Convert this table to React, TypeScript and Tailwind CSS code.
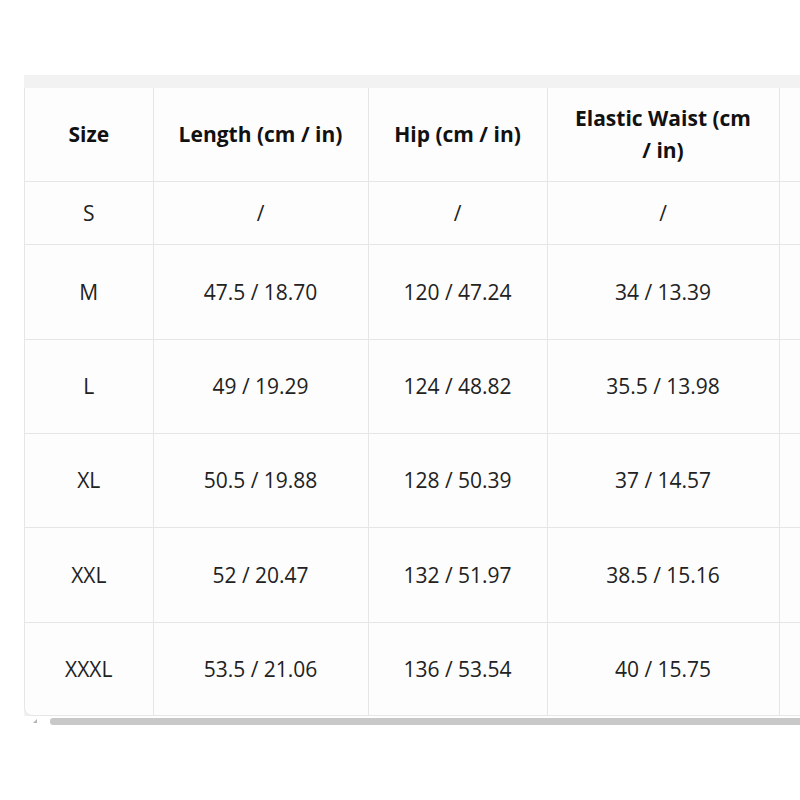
import React from "react";

const rows: [string, string, string, string][] = [
  ["S", "/", "/", "/"],
  ["M", "47.5 / 18.70", "120 / 47.24", "34 / 13.39"],
  ["L", "49 / 19.29", "124 / 48.82", "35.5 / 13.98"],
  ["XL", "50.5 / 19.88", "128 / 50.39", "37 / 14.57"],
  ["XXL", "52 / 20.47", "132 / 51.97", "38.5 / 15.16"],
  ["XXXL", "53.5 / 21.06", "136 / 53.54", "40 / 15.75"],
];

const heights = ["h-[63px]", "h-[95px]", "h-[94px]", "h-[94px]", "h-[95px]", "h-[93px]"];

export default function App() {
  return (
    <div
      className="w-full h-[800px] overflow-hidden bg-white"
      style={{ fontFamily: '"Open Sans", "Noto Sans", sans-serif' }}
    >
      <div className="pt-[75px] pl-[24px]">
        <div className="w-[1000px] bg-[#f2f2f2] pt-[13px]">
          <div className="border-l border-b border-[#e6e6e6] rounded-bl-[8px] overflow-hidden bg-[#fdfdfd] w-fit">
            <table className="table-fixed border-collapse text-[21px] leading-[32px] text-[#222]">
              <colgroup>
                <col className="w-[128px]" />
                <col className="w-[215px]" />
                <col className="w-[179px]" />
                <col className="w-[232px]" />
                <col className="w-[220px]" />
              </colgroup>
              <thead>
                <tr className="h-[93px]">
                  <th className="border-r border-b border-[#e6e6e6] font-bold text-[#111] px-[14px] text-center">Size</th>
                  <th className="border-r border-b border-[#e6e6e6] font-bold text-[#111] px-[14px] text-center">Length (cm / in)</th>
                  <th className="border-r border-b border-[#e6e6e6] font-bold text-[#111] px-[14px] text-center">Hip (cm / in)</th>
                  <th className="border-r border-b border-[#e6e6e6] font-bold text-[#111] px-[14px] text-center">
                    Elastic Waist (cm
                    <br />/ in)
                  </th>
                  <th className="border-b border-[#e6e6e6] px-[14px]"></th>
                </tr>
              </thead>
              <tbody>
                {rows.map((r, i) => (
                  <tr key={r[0]} className={heights[i]}>
                    {r.map((c, j) => (
                      <td
                        key={j}
                        className={
                          i === rows.length - 1
                            ? "border-r border-[#e6e6e6] text-center px-[14px]"
                            : "border-r border-b border-[#e6e6e6] text-center px-[14px]"
                        }
                      >
                        {c}
                      </td>
                    ))}
                    <td
                      className={
                        i === rows.length - 1
                          ? "px-[14px]"
                          : "border-b border-[#e6e6e6] px-[14px]"
                      }
                    ></td>
                  </tr>
                ))}
              </tbody>
            </table>
          </div>
        </div>
        <div className="flex items-center h-[7px] mt-[2px]">
          <svg width="26" height="7" viewBox="0 0 26 7" className="shrink-0">
            <path d="M9 5 L13 1 L13 5 Z" fill="#b5b5b5" />
          </svg>
          <div className="h-[7px] w-[900px] bg-[#c8c8c8] rounded-l-[3px]"></div>
        </div>
      </div>
    </div>
  );
}
